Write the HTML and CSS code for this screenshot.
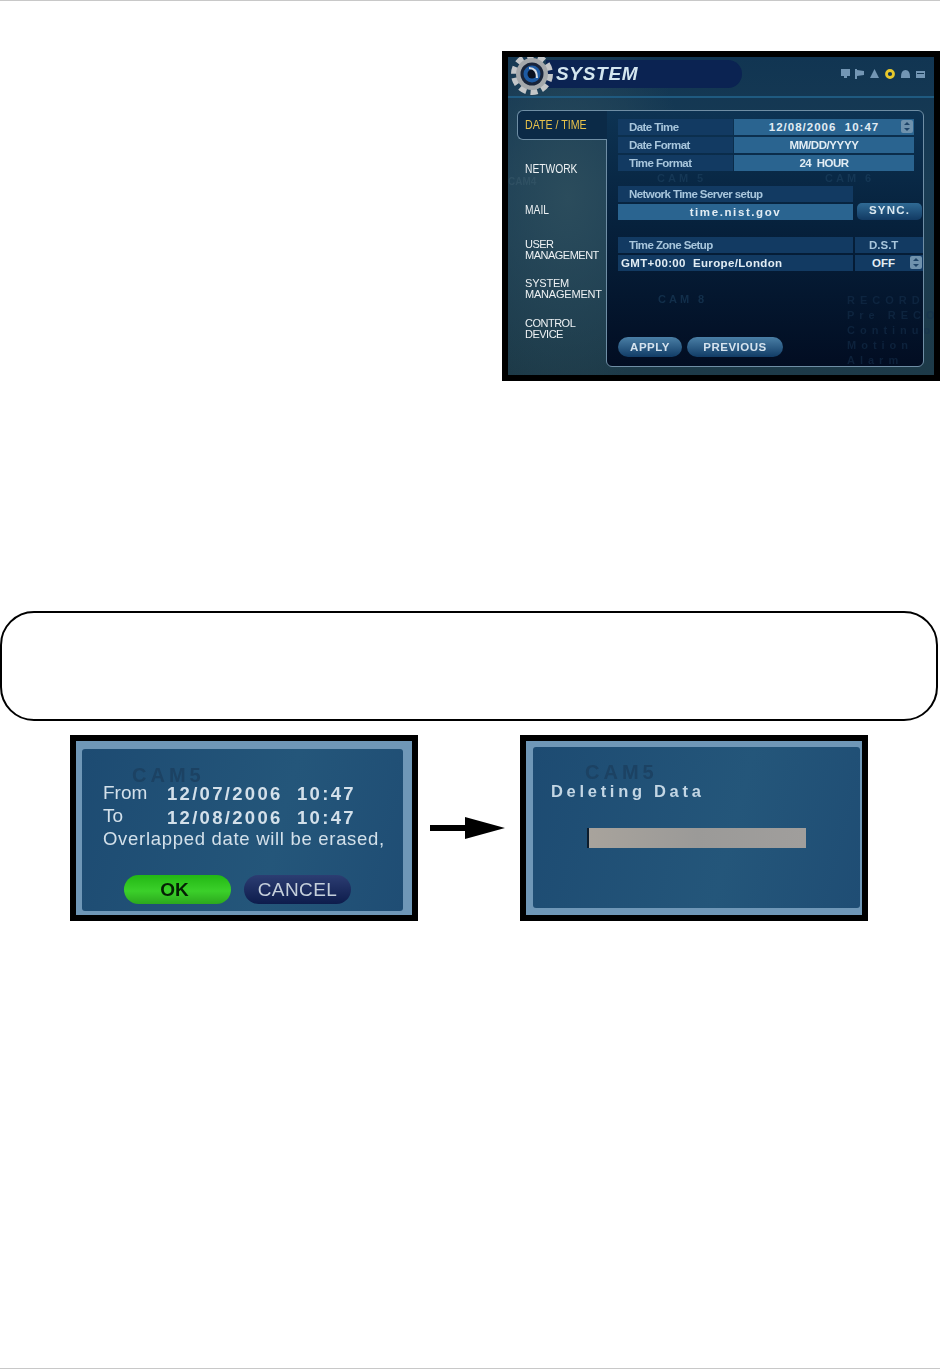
FILE: index.html
```html
<!DOCTYPE html>
<html lang="en">
<head>
    <meta charset="UTF-8">
    <meta name="viewport" content="width=device-width, initial-scale=1.0">
    <title>System menu</title>
    <link rel="stylesheet" href="styles.css">
</head>
<body>
    <div class="rule"></div>

    <!-- System menu screenshot -->
    <div class="system-row">
        <div class="system-shot">
            <div class="sys-head">
                <svg class="gear" viewBox="0 0 46 42">
                    <circle cx="23" cy="21" r="18" fill="none" stroke="#c3c6c8" stroke-width="6" stroke-dasharray="7 4.3"/>
                    <circle cx="23" cy="21" r="16" fill="#a4a8ab"/>
                    <circle cx="23" cy="21" r="11.5" fill="#18243a"/>
                    <circle cx="23" cy="21" r="8.5" fill="#1d5aa2"/>
                    <circle cx="23" cy="21" r="4.5" fill="#0a1120"/>
                    <path d="M20 15 Q28 15 28 25" fill="none" stroke="#d8dde2" stroke-width="2"/>
                </svg>
                <div class="sys-pill">SYSTEM</div>
                <svg class="sys-icons" viewBox="0 0 84 10">
                    <path d="M0 0H9V7H6V9H3V7H0Z" fill="#7396b4"/>
                    <path d="M14 0H16V10H14ZM16 1L23 2V6L16 7Z" fill="#7396b4"/>
                    <path d="M29 9L33.5 0L38 9Z" fill="#7396b4"/>
                    <circle cx="49" cy="5" r="3.5" fill="none" stroke="#e8c92c" stroke-width="2.8"/>
                    <path d="M60 9V8Q60 1 64.5 1Q69 1 69 8V9Z" fill="#7396b4"/>
                    <path d="M75 2H84V9H75ZM76 4V5H83V4Z" fill="#7396b4" fill-rule="evenodd"/>
                </svg>
            </div>

            <div class="sys-body">
                <div class="sys-nav">
                    <div class="nav-tab"><span class="squeeze">DATE / TIME</span></div>
                    <div class="nav-item"><span class="squeeze">NETWORK</span></div>
                    <div class="nav-item nav-mail"><span class="squeeze">MAIL</span></div>
                    <div class="nav-item nav-small">USER<br>MANAGEMENT</div>
                    <div class="nav-item nav-small nav-wide">SYSTEM<br>MANAGEMENT</div>
                    <div class="nav-item nav-small">CONTROL<br>DEVICE</div>
                </div>

                <div class="sys-panel">
                    <div class="form-row">
                        <div class="cell label w-label">Date Time</div>
                        <div class="cell value w-value">12/08/2006  10:47<span class="spin"></span></div>
                    </div>
                    <div class="form-row">
                        <div class="cell label w-label">Date Format</div>
                        <div class="cell value w-value thin">MM/DD/YYYY</div>
                    </div>
                    <div class="form-row">
                        <div class="cell label w-label">Time Format</div>
                        <div class="cell value w-value thinner">24  HOUR</div>
                    </div>

                    <div class="form-row group-ntp">
                        <div class="cell label w-wide">Network Time Server setup</div>
                    </div>
                    <div class="form-row">
                        <div class="cell value w-wide spaced">time.nist.gov</div>
                        <div class="sync">SYNC.</div>
                    </div>

                    <div class="form-row group-zone">
                        <div class="cell label w-wide">Time Zone Setup</div>
                        <div class="cell label w-dst">D.S.T</div>
                    </div>
                    <div class="form-row">
                        <div class="cell label zone w-wide">GMT+00:00  Europe/London</div>
                        <div class="cell label w-dst off">OFF<span class="spin"></span></div>
                    </div>

                    <div class="sys-buttons">
                        <div class="pill-btn btn-apply">APPLY</div>
                        <div class="pill-btn btn-prev">PREVIOUS</div>
                    </div>
                </div>
            </div>

            <div class="ghost ghost-cam4">CAM4</div>
            <div class="ghost ghost-cam5">CAM 5</div>
            <div class="ghost ghost-cam6">CAM 6</div>
            <div class="ghost ghost-cam8">CAM 8</div>
            <div class="ghost ghost-record">RECORD<br>Pre RECO<br>Continuo<br>Motion<br>Alarm</div>
        </div>
    </div>

    <!-- Note box -->
    <div class="note"></div>

    <!-- Delete dialogs -->
    <div class="dialog-row">
        <div class="dialog-shot bezel-ask">
            <div class="dialog-panel panel-ask">
                <div class="ghost ghost-dialog">CAM5</div>
                <div class="ask-line"><span class="ask-key">From</span><span class="ask-date">12/07/2006</span><span class="ask-time">10:47</span></div>
                <div class="ask-line ask-to"><span class="ask-key">To</span><span class="ask-date">12/08/2006</span><span class="ask-time">10:47</span></div>
                <div class="ask-note">Overlapped date will be erased,</div>
                <div class="ask-buttons">
                    <div class="btn-ok">OK</div>
                    <div class="btn-cancel">CANCEL</div>
                </div>
            </div>
        </div>

        <svg class="arrow" viewBox="0 0 75 22">
            <path d="M0 8H35V0L75 11L35 22V14H0Z" fill="#000"/>
        </svg>

        <div class="dialog-shot bezel-del">
            <div class="dialog-panel panel-del">
                <div class="ghost ghost-dialog2">CAM5</div>
                <div class="del-title">Deleting Data</div>
                <div class="del-bar"></div>
            </div>
        </div>
    </div>

    <div class="rule rule-bottom"></div>
</body>
</html>
```

FILE: styles.css
```css
html, body {
    margin: 0;
    padding: 0;
    background: #fff;
}
body {
    height: 1369px;
    overflow: hidden;
    display: flex;
    flex-direction: column;
    font-family: "Liberation Sans", Arial, sans-serif;
}
.rule {
    height: 1px;
    background: #c8c8c8;
    flex: none;
}
.rule-bottom {
    margin-top: auto;
}

/* system screenshot */
.system-row {
    display: flex;
    justify-content: flex-end;
    margin-top: 50px;
}
.system-shot {
    position: relative;
    box-sizing: border-box;
    width: 438px;
    height: 330px;
    border: 6px solid #000;
    display: flex;
    flex-direction: column;
    overflow: hidden;
    color: #e6edf2;
    background:
        radial-gradient(ellipse 120px 200px at 60px 140px, #2b4c5c, transparent),
        linear-gradient(#113552, #1a3d55 40%, #1d3a48);
}
.ghost {
    position: absolute;
    color: #1f4463;
    opacity: .55;
    font-weight: bold;
    letter-spacing: 3px;
}
.ghost-cam4 { left: 0; top: 119px; font-size: 10px; letter-spacing: 0; color: #3a5a6c; }
.ghost-cam5 { left: 149px; top: 115px; font-size: 11px; }
.ghost-cam6 { left: 317px; top: 115px; font-size: 11px; }
.ghost-cam8 { left: 150px; top: 236px; font-size: 11px; }
.ghost-record {
    left: 339px;
    top: 236px;
    font-size: 11px;
    line-height: 15px;
    letter-spacing: 5px;
    white-space: nowrap;
    color: #17324f;
}
.sys-head {
    position: relative;
    display: flex;
    align-items: center;
    flex: none;
    height: 41px;
    box-sizing: border-box;
    padding-bottom: 5px;
    border-bottom: 2px solid #1f5a80;
    filter: blur(.35px);
}
.gear {
    width: 46px;
    height: 42px;
    flex: none;
    margin: 0 -9px 0 1px;
    position: relative;
    z-index: 1;
}
.sys-pill {
    width: 186px;
    height: 28px;
    line-height: 27px;
    padding-left: 10px;
    background: #0b2352;
    border-radius: 0 15px 15px 0;
    font-size: 19px;
    font-weight: bold;
    font-style: italic;
    letter-spacing: .7px;
    color: #d4e6ef;
}
.sys-icons {
    width: 84px;
    height: 10px;
    margin-left: auto;
    margin-right: 9px;
}
.sys-body {
    flex: 1;
    display: flex;
    padding: 12px 10px 8px 9px;
    min-height: 0;
    filter: blur(.35px);
}
.sys-nav {
    width: 89px;
    flex: none;
    position: relative;
    z-index: 1;
}
.nav-tab {
    box-sizing: border-box;
    height: 30px;
    margin-right: -1px;
    margin-bottom: 9px;
    padding: 7px 0 0 7px;
    border: 1px solid #6f8ea5;
    border-right: 0;
    border-radius: 6px 0 0 6px;
    background: #0b2a47;
    color: #e8c24a;
    font-size: 12.5px;
}
.nav-item {
    height: 39.5px;
    display: flex;
    align-items: center;
    padding-left: 8px;
    font-size: 12.5px;
    color: #eef2f4;
}
.nav-mail {
    margin-top: 2px;
}
.squeeze {
    display: inline-block;
    transform: scaleX(.82);
    transform-origin: left center;
    white-space: nowrap;
}
.nav-tab .squeeze {
    transform: scaleX(.85);
}
.nav-small {
    font-size: 11px;
    line-height: 11px;
    letter-spacing: -.5px;
    white-space: nowrap;
}
.nav-wide {
    letter-spacing: -.2px;
}
.sys-panel {
    flex: 1;
    box-sizing: border-box;
    display: flex;
    flex-direction: column;
    padding: 8px 0 9px 11px;
    border: 1px solid #6f8ea5;
    border-radius: 0 6px 6px 6px;
    background: linear-gradient(#0d3353, #06213c 45%, #020d22);
}
.form-row {
    display: flex;
    margin-bottom: 2px;
}
.group-ntp {
    margin-top: 13px;
}
.group-zone {
    margin-top: 15px;
}
.cell {
    position: relative;
    box-sizing: border-box;
    height: 16px;
    line-height: 16px;
    font-size: 11.5px;
    font-weight: bold;
    white-space: pre;
}
.label {
    padding-left: 11px;
    background: #123a62;
    color: #a8c6dc;
    letter-spacing: -.58px;
}
.value {
    text-align: center;
    background: #2a6490;
    color: #e2edf4;
    letter-spacing: 1px;
}
.w-label { width: 115px; margin-right: 1px; }
.w-value { width: 180px; }
.w-wide { width: 235px; }
.w-dst {
    width: 68px;
    margin-left: 2px;
    padding-left: 14px;
    letter-spacing: 0;
}
.thin {
    letter-spacing: -.4px;
}
.thinner {
    letter-spacing: -.5px;
}
.spaced {
    letter-spacing: 1.6px;
}
.zone {
    padding-left: 3px;
    letter-spacing: .35px;
    color: #e2edf4;
}
.off {
    padding-left: 17px;
    color: #e2edf4;
}
.spin {
    position: absolute;
    right: 1px;
    top: 1px;
    width: 12px;
    height: 13px;
    border-radius: 2px;
    background: #6f92ad;
}
.spin::before,
.spin::after {
    content: "";
    position: absolute;
    left: 3px;
    border-left: 3px solid transparent;
    border-right: 3px solid transparent;
}
.spin::before {
    top: 2px;
    border-bottom: 3px solid #1e4468;
}
.spin::after {
    bottom: 2px;
    border-top: 3px solid #1e4468;
}
.sync {
    box-sizing: border-box;
    width: 65px;
    height: 17px;
    line-height: 15px;
    margin: -1px 0 0 4px;
    text-align: center;
    border-radius: 5px;
    background: linear-gradient(#2f6a94, #123a63);
    color: #dbe8f0;
    font-size: 11.5px;
    font-weight: bold;
    letter-spacing: 1.2px;
}
.sys-buttons {
    margin-top: auto;
    display: flex;
    gap: 5px;
}
.pill-btn {
    height: 20px;
    line-height: 20px;
    text-align: center;
    border-radius: 10px;
    background: linear-gradient(#4a7fa6, #113c66);
    color: #d5e3ee;
    font-size: 11.5px;
    font-weight: bold;
    letter-spacing: .5px;
}
.btn-apply { width: 64px; }
.btn-prev { width: 96px; }

/* note box */
.note {
    box-sizing: border-box;
    width: 938px;
    height: 110px;
    margin-top: 230px;
    border: 2px solid #000;
    border-radius: 34px;
    flex: none;
}

/* dialogs */
.dialog-row {
    display: flex;
    align-items: center;
    margin-top: 14px;
    padding-left: 70px;
}
.dialog-shot {
    box-sizing: border-box;
    width: 348px;
    height: 186px;
    border: 6px solid #000;
    display: flex;
    background: #6f97b7;
}
.bezel-ask { padding: 8px 9px 4px 6px; }
.bezel-del { padding: 6px 2px 7px 7px; }
.dialog-panel {
    position: relative;
    flex: 1;
    border-radius: 3px;
    background: linear-gradient(105deg, #1d4b72, #24567a 60%, #1f4d74);
    filter: blur(.4px);
}
.arrow {
    width: 75px;
    height: 22px;
    margin: 0 15px 0 12px;
    flex: none;
}
.panel-ask {
    box-sizing: border-box;
    padding: 33px 0 0 21px;
    color: #d3e0ea;
}
.ghost-dialog {
    left: 50px;
    top: 15px;
    font-size: 20px;
    letter-spacing: 4px;
    color: #1c4263;
    opacity: 1;
}
.ghost-dialog2 {
    left: 52px;
    top: 14px;
    font-size: 20px;
    letter-spacing: 4px;
    color: #1c4263;
    opacity: 1;
}
.ask-line {
    position: relative;
    display: flex;
    height: 24px;
    line-height: 22px;
    font-size: 19px;
}
.ask-to {
    height: 22px;
    line-height: 20px;
}
.ask-key {
    width: 64px;
}
.ask-date,
.ask-time {
    font-weight: bold;
    letter-spacing: 2.3px;
    font-size: 18.5px;
    line-height: 24px;
}
.ask-date {
    width: 130px;
}
.ask-note {
    position: relative;
    font-size: 18.5px;
    line-height: 22px;
    letter-spacing: .7px;
    white-space: nowrap;
}
.ask-buttons {
    display: flex;
    gap: 13px;
    margin: 25px 0 0 21px;
}
.btn-ok,
.btn-cancel {
    width: 107px;
    height: 29px;
    line-height: 29px;
    border-radius: 15px;
    text-align: center;
    font-size: 19px;
}
.btn-ok {
    background: linear-gradient(#22b814, #3bd02a 55%, #2ca81e);
    color: #052004;
    font-weight: bold;
    padding-right: 6px;
    box-sizing: border-box;
}
.btn-cancel {
    background: linear-gradient(#2c3d72, #0d1c4c);
    color: #c5cfdb;
    letter-spacing: .4px;
}
.panel-del {
    box-sizing: border-box;
    padding: 33px 0 0 18px;
}
.del-title {
    position: relative;
    font-size: 16.5px;
    line-height: 22px;
    font-weight: bold;
    letter-spacing: 3.7px;
    color: #c3d6e4;
}
.del-bar {
    box-sizing: border-box;
    width: 219px;
    height: 20px;
    margin: 26px 0 0 36px;
    border-left: 2px solid #0c1c2c;
    background: linear-gradient(90deg, #a8a39c, #9b9a98 50%, #a09e9c);
}
```
